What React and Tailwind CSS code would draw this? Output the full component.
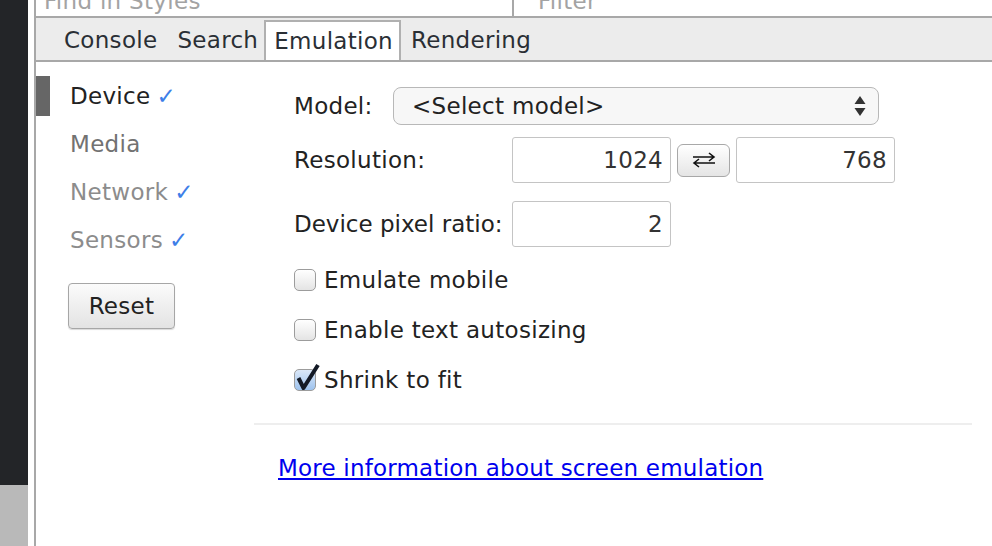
import React from 'react';

const font = { fontFamily: '"DejaVu Sans", "Liberation Sans", sans-serif' };

const SideItem = ({ label, active, checked, tone }) => (
  <div className="flex h-[48px] items-center">
    <div className={`w-[14px] self-stretch my-[4px] ${active ? 'bg-[#666666]' : ''}`} />
    <span className={`ml-[20px] ${tone}`}>
      {label}
      {checked && <span className="ml-[6px] text-[#3d7ee8]">✓</span>}
    </span>
  </div>
);

const Checkbox = ({ label, checked }) => (
  <div className="flex h-[50px] items-center">
    <div className="relative">
      <div
        className={`w-[22px] h-[22px] rounded-[5px] border border-[#9c9c9c] ${
          checked
            ? 'bg-gradient-to-b from-[#dbe8f8] to-[#9ec3ee]'
            : 'bg-gradient-to-b from-[#ffffff] to-[#e4e4e4]'
        }`}
      />
      {checked && (
        <svg className="absolute left-[2px] -top-[6px]" width="24" height="28" viewBox="0 0 24 28">
          <path d="M2.5 15 L7.5 25 L22 2" fill="none" stroke="#141a26" strokeWidth="4" strokeLinejoin="round" />
        </svg>
      )}
    </div>
    <span className="ml-[8px] text-[#222222]">{label}</span>
  </div>
);

const NumberBox = ({ value }) => (
  <div className="w-[159px] h-[46px] border border-[#c4c4c4] rounded-[3px] bg-white flex items-center justify-end pr-[7px] text-[#333333]">
    {value}
  </div>
);

export default function App() {
  return (
    <div className="flex w-[992px] h-[546px] overflow-hidden bg-white text-[23px] tracking-[0.3px]" style={font}>
      {/* dark window edge */}
      <div className="w-[28px] flex flex-col">
        <div className="flex-1 bg-[#232528]" />
        <div className="h-[61px] bg-[#b9b9b9]" />
      </div>
      <div className="w-[6px] bg-white" />

      <div className="flex-1 flex flex-col border-l-2 border-[#a8a8a8]">
        {/* cut-off search row */}
        <div className="h-[16px] flex overflow-hidden border-b-2 border-[#a8a8a8] box-content">
          <div className="w-[478px] pl-[8px] border-r-2 border-[#a8a8a8] leading-[26px] -mt-[12px] text-[#a3a3a3]">
            Find in Styles
          </div>
          <div className="pl-[24px] leading-[26px] -mt-[12px] text-[#a3a3a3]">Filter</div>
        </div>

        {/* tab strip */}
        <div className="h-[42px] flex items-end bg-[#ececec] border-b-2 border-[#a8a8a8] box-content pl-[18px] text-[#2a2f35]">
          <div className="h-[40px] px-[10px] flex items-center">Console</div>
          <div className="h-[40px] pl-[10px] pr-[6px] flex items-center">Search</div>
          <div className="h-[40px] pl-[8px] pr-[6px] flex items-center bg-white border-2 border-b-0 border-[#b0b0b0]">Emulation</div>
          <div className="h-[40px] px-[10px] flex items-center">Rendering</div>
        </div>

        <div className="flex flex-1">
          {/* sidebar */}
          <div className="w-[218px] pt-[10px] flex flex-col">
            <SideItem label="Device" active checked tone="text-[#222222]" />
            <SideItem label="Media" tone="text-[#727272]" />
            <SideItem label="Network" checked tone="text-[#8c8c8c]" />
            <SideItem label="Sensors" checked tone="text-[#8c8c8c]" />
            <button className="ml-[32px] mt-[19px] w-[107px] h-[46px] rounded-[4px] border border-[#a6a6a6] bg-gradient-to-b from-[#fbfbfb] to-[#e3e3e3] shadow-[0_1px_1px_rgba(0,0,0,0.15)] text-[#222222]">
              Reset
            </button>
          </div>

          {/* panel */}
          <div className="flex-1 flex flex-col pr-[20px]">
            <div className="pl-[40px] pt-[25px] flex flex-col">
              <div className="flex items-center h-[38px]">
                <span className="w-[99px] text-[#222222]">Model:</span>
                <div className="w-[486px] h-[38px] rounded-[8px] border border-[#b8b8b8] bg-[#f7f7f7] flex items-center justify-between pl-[18px] pr-[12px] text-[#222222]">
                  <span>&lt;Select model&gt;</span>
                  <svg width="12" height="22" viewBox="0 0 12 22">
                    <path d="M6 1 L11.5 9 L0.5 9 Z" fill="#333333" />
                    <path d="M0.5 13 L11.5 13 L6 21 Z" fill="#333333" />
                  </svg>
                </div>
              </div>

              <div className="flex items-center mt-[12px] h-[46px]">
                <span className="w-[218px] text-[#222222]">Resolution:</span>
                <NumberBox value="1024" />
                <button className="mx-[6px] w-[53px] h-[33px] rounded-[6px] border border-[#a8a8a8] bg-gradient-to-b from-[#ffffff] to-[#e5e5e5] flex items-center justify-center">
                  <svg width="24" height="16" viewBox="0 0 24 16">
                    <path d="M1 5 H22 M17 1 L22 5 L17 9" fill="none" stroke="#111111" strokeWidth="1.6" />
                    <path d="M23 11 H2 M7 7 L2 11 L7 15" fill="none" stroke="#111111" strokeWidth="1.6" />
                  </svg>
                </button>
                <NumberBox value="768" />
              </div>

              <div className="flex items-center mt-[18px] h-[46px]">
                <span className="w-[218px] text-[#222222] tracking-normal">Device pixel ratio:</span>
                <NumberBox value="2" />
              </div>

              <div className="mt-[8px] flex flex-col">
                <Checkbox label="Emulate mobile" />
                <Checkbox label="Enable text autosizing" />
                <Checkbox label="Shrink to fit" checked />
              </div>
            </div>

            <div className="mt-[18px] h-[2px] bg-[#eeeeee]" />

            <div className="pl-[24px] mt-[26px]">
              <a href="#" className="text-[#0000ee] underline tracking-[0.2px]">
                More information about screen emulation
              </a>
            </div>
          </div>
        </div>
      </div>
    </div>
  );
}
